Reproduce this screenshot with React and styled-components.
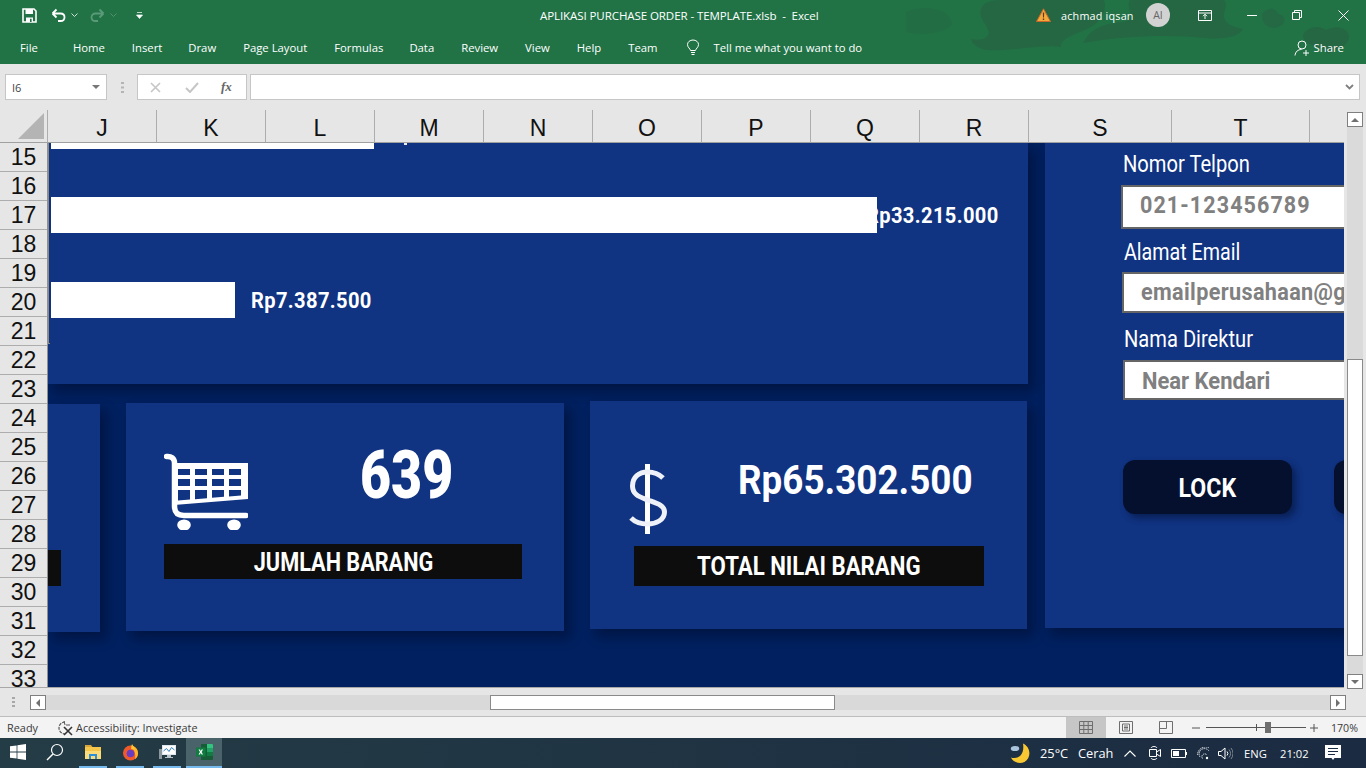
import React from 'react';
import styled, { createGlobalStyle } from 'styled-components';

const Global = createGlobalStyle`
    html, body { margin: 0; padding: 0; background: #e6e6e6; overflow: hidden; }
    * { box-sizing: border-box; }
`;

const UI_FONT = `'Open Sans', 'Noto Sans', sans-serif`;
const SHAPE_FONT = `'Roboto', 'Liberation Sans', sans-serif`;
const PANEL = '#103382';
const SHADOW = '6px 7px 11px rgba(0, 8, 30, 0.42)';

const Page = styled.div`
    width: 1366px;
    height: 768px;
    display: flex;
    flex-direction: column;
    overflow: hidden;
    font-family: ${UI_FONT};
`;

const Drawing = styled.svg`
    display: block;
    flex: none;
`;

/* ribbon */
const Ribbon = styled.header`
    position: relative;
    height: 64px;
    flex: none;
    background: #217346;
    color: #fff;
`;
const RibbonArt = styled.svg`
    position: absolute;
    inset: 0;
`;
const TitleRow = styled.div`
    position: relative;
    height: 30px;
    display: flex;
    align-items: center;
`;
const QuickTools = styled.div`
    display: flex;
    align-items: center;
    padding-left: 22px;
    width: 540px;
`;
const QuickIcon = styled.svg`
    display: block;
    flex: none;
    margin-left: ${p => p.$ml || 0}px;
`;
const DocTitle = styled.div`
    font-size: 11.55px;
    white-space: pre;
    width: 496px;
    letter-spacing: -0.1px;
`;
const UserName = styled.span`
    font-size: 10.8px;
    letter-spacing: 0.2px;
    width: 85px;
    margin-left: 10px;
`;
const Avatar = styled.div`
    width: 24px;
    height: 24px;
    border-radius: 50%;
    background: #d2d2d2;
    color: #666;
    font-size: 10.5px;
    display: flex;
    align-items: center;
    justify-content: center;
`;
const TabRow = styled.nav`
    position: relative;
    height: 34px;
    display: flex;
    align-items: center;
    padding-top: 1px;
    font-size: 11.3px;
`;
const TabList = styled.div`
    display: flex;
    align-items: center;
    padding-left: 20px;
`;
const TabItem = styled.span`
    margin-right: ${p => p.$mr}px;
    white-space: nowrap;
`;
const TellMe = styled.span`
    margin-left: 14px;
    white-space: nowrap;
    width: 580px;
`;
const ShareText = styled.span`
    margin-left: 4px;
`;

/* formula bar */
const FormulaRow = styled.div`
    height: 46px;
    flex: none;
    background: #e6e6e6;
    display: flex;
    padding: 10px 6px 10px 5px;
`;
const NameBox = styled.div`
    width: 102px;
    height: 26px;
    background: #fff;
    border: 1px solid #c6c6c6;
    display: flex;
    align-items: center;
    justify-content: space-between;
    padding: 0 6px 0 6px;
    font-size: 11px;
    color: #444;
`;
const Caret = styled.i`
    width: 0;
    height: 0;
    display: block;
    border-left: 4px solid transparent;
    border-right: 4px solid transparent;
    border-top: 4px solid ${p => p.$color || '#777'};
`;
const GripDots = styled.div`
    width: 30px;
    display: flex;
    align-items: center;
    justify-content: center;
`;
const FxBox = styled.div`
    width: 110px;
    height: 26px;
    background: #fff;
    border: 1px solid #c6c6c6;
    display: flex;
    align-items: center;
    padding-left: 12px;
    gap: 24px;
`;
const FxGlyph = styled.span`
    font-family: 'Liberation Serif', serif;
    font-style: italic;
    font-weight: 700;
    font-size: 13px;
    color: #666;
    margin-left: -2px;
`;
const FormulaInput = styled.div`
    flex: 1;
    height: 26px;
    margin-left: 3px;
    background: #fff;
    border: 1px solid #c6c6c6;
    display: flex;
    align-items: center;
    justify-content: flex-end;
    padding-right: 5px;
`;

/* sheet */
const SheetArea = styled.div`
    height: 578px;
    flex: none;
    display: flex;
    background: #e6e6e6;
`;
const SheetMain = styled.div`
    width: 1344px;
    display: flex;
    flex-direction: column;
    border-bottom: 1px solid #a8a8a8;
`;
const HeaderRow = styled.div`
    height: 33px;
    flex: none;
    display: flex;
    border-bottom: 1px solid #a0a0a0;
`;
const Corner = styled.div`
    width: 48px;
    display: flex;
    align-items: flex-end;
    justify-content: flex-end;
    padding: 0 3px 3px 0;
`;
const ColHead = styled.div`
    width: ${p => p.$w}px;
    flex: none;
    border-left: 1px solid #adadad;
    text-align: center;
    font: 23px/36px 'Liberation Sans', sans-serif;
    color: #111;
`;
const SheetBody = styled.div`
    flex: 1;
    display: flex;
    min-height: 0;
`;
const RowHeads = styled.div`
    width: 48px;
    flex: none;
    overflow: hidden;
    border-right: 1px solid #909090;
`;
const RowHead = styled.div`
    height: 29px;
    border-bottom: 1px solid #adadad;
    text-align: center;
    font: 23px/28px 'Liberation Sans', sans-serif;
    color: #111;
`;
const Canvas = styled.main`
    position: relative;
    width: 1296px;
    overflow: hidden;
    display: flex;
    align-items: flex-start;
    background: #00205f;
`;
const SelectionEdge = styled.div`
    position: absolute;
    z-index: 3;
    left: 0;
    top: 0;
    width: 2px;
    height: 201px;
    border-left: 1px solid #8a8a8a;
    border-bottom: 1px solid #8a8a8a;
`;
const LeftColumn = styled.div`
    width: 980px;
    flex: none;
`;
const ChartPanel = styled.section`
    height: 241px;
    padding-left: 3px;
    background: ${PANEL};
    box-shadow: ${SHADOW};
    display: flex;
    flex-direction: column;
`;
const BarRow = styled.div`
    display: flex;
    align-items: center;
    height: ${p => p.$h}px;
    margin-top: ${p => p.$top}px;
`;
const Bar = styled.div`
    position: relative;
    z-index: 1;
    height: 100%;
    width: ${p => p.$w}px;
    background: #fff;
`;
const BarSpeck = styled.i`
    display: block;
    align-self: flex-start;
    width: 3px;
    height: 2px;
    margin-left: 30px;
    background: #e8ecf5;
`;
const Squeezed = styled.span`
    display: inline-block;
    white-space: nowrap;
    font-family: ${SHAPE_FONT};
    font-weight: ${p => p.$weight || 700};
    font-size: ${p => p.$size}px;
    line-height: 1;
    letter-spacing: ${p => p.$track || 0}px;
    color: ${p => p.$color || '#fff'};
    transform: scaleX(${p => p.$squeeze || 1});
    transform-origin: ${p => p.$origin || 'left'} center;
`;
const BarLabel = styled(Squeezed)`
    margin-left: ${p => p.$ml}px;
    margin-top: 2px;
`;
const CardRow = styled.div`
    display: flex;
    align-items: flex-start;
`;
const Card = styled.section`
    width: ${p => p.$w}px;
    height: 228px;
    flex: none;
    margin-top: ${p => p.$top}px;
    margin-left: ${p => p.$ml || 0}px;
    padding: ${p => p.$pad || '0'};
    background: ${PANEL};
    box-shadow: ${SHADOW};
`;
const CardTop = styled.div`
    display: flex;
    align-items: flex-start;
`;
const CardValue = styled(Squeezed)`
    margin-left: ${p => p.$ml}px;
    margin-top: ${p => p.$mt}px;
`;
const CaptionBar = styled.div`
    width: ${p => p.$w}px;
    height: ${p => p.$h}px;
    margin-top: ${p => p.$top}px;
    margin-left: ${p => p.$ml || 0}px;
    padding-top: ${p => p.$nudge || 0}px;
    background: #0d0d0d;
    display: flex;
    align-items: center;
    justify-content: center;
`;
const SidePanel = styled.aside`
    width: 299px;
    height: 485px;
    flex: none;
    margin-left: 17px;
    padding: 8px 0 0 76px;
    background: ${PANEL};
    box-shadow: ${SHADOW};
    overflow: hidden;
`;
const FieldLabel = styled.div`
    height: 26px;
    margin-top: ${p => p.$top || 0}px;
    padding-left: ${p => p.$indent + 2}px;
    color: #fff;
    font: 400 23px/28px ${SHAPE_FONT};
    white-space: nowrap;
`;
const FieldLabelText = styled.span`
    display: inline-block;
    transform: scaleX(${p => p.$squeeze});
    transform-origin: left center;
`;
const FieldBox = styled.div`
    width: 240px;
    height: ${p => p.$h}px;
    margin-top: ${p => p.$top}px;
    margin-left: ${p => p.$indent}px;
    padding: 0 0 0 17px;
    background: #fff;
    border: 2px solid #666;
    display: flex;
    align-items: center;
    overflow: hidden;
`;
const FieldValue = styled(Squeezed)`
    color: #808080;
    margin-top: ${p => p.$mt}px;
`;
const ButtonRow = styled.div`
    display: flex;
    gap: 42px;
    margin-top: 60px;
    margin-left: 2px;
`;
const LockButton = styled.div`
    width: 169px;
    height: 54px;
    flex: none;
    padding-top: 2px;
    border-radius: 12px;
    background: #050f2e;
    box-shadow: 4px 4px 7px rgba(0, 8, 30, 0.45);
    display: flex;
    align-items: center;
    justify-content: center;
`;
const VScroll = styled.div`
    width: 22px;
    flex: none;
    display: flex;
    flex-direction: column;
    align-items: center;
    padding: 2px 0 1px 0;
    height: 580px;
    position: relative;
`;
const VTrack = styled.div`
    flex: 1;
    width: 16px;
    background: #dadada;
    display: flex;
    flex-direction: column;
`;
const VThumb = styled.div`
    width: 16px;
    height: 297px;
    margin-top: 232px;
    background: #fff;
    border: 1px solid #8a8a8a;
`;
const ScrollBtn = styled.div`
    width: 16px;
    height: 15px;
    flex: none;
    background: #fff;
    border: 1px solid #7f7f7f;
    display: flex;
    align-items: center;
    justify-content: center;
`;
const Arrow = styled.i`
    display: block;
    width: 0;
    height: 0;
    ${p => p.$dir === 'up' && 'border-left: 4px solid transparent; border-right: 4px solid transparent; border-bottom: 4px solid #707070;'}
    ${p => p.$dir === 'down' && 'border-left: 4px solid transparent; border-right: 4px solid transparent; border-top: 4px solid #707070;'}
    ${p => p.$dir === 'left' && 'border-top: 4px solid transparent; border-bottom: 4px solid transparent; border-right: 4px solid #707070;'}
    ${p => p.$dir === 'right' && 'border-top: 4px solid transparent; border-bottom: 4px solid transparent; border-left: 4px solid #707070;'}
`;

/* horizontal scroll */
const HScrollRow = styled.div`
    height: 28px;
    flex: none;
    background: #e6e6e6;
    display: flex;
    align-items: flex-start;
    padding: 7px 0 0 12px;
`;
const HDots = styled.div`
    width: 18px;
    height: 15px;
    display: flex;
    flex-direction: column;
    gap: 2px;
    padding-top: 2px;
`;
const Dot = styled.i`
    display: block;
    width: 3px;
    height: 2px;
    background: #a8a8a8;
`;
const HTrack = styled.div`
    width: 1284px;
    height: 15px;
    background: #d9d9d9;
    padding-left: 444px;
`;
const HThumb = styled.div`
    width: 345px;
    height: 15px;
    background: #fff;
    border: 1px solid #8a8a8a;
`;

/* status bar */
const StatusBar = styled.footer`
    height: 22px;
    flex: none;
    background: #f3f3f3;
    border-top: 1px solid #bdbdbd;
    display: flex;
    align-items: center;
    padding-left: 7px;
    font-size: 10.9px;
    color: #3a3a3a;
`;
const ReadyText = styled.span`
    width: 50px;
`;
const AccessText = styled.span`
    margin-left: 2px;
    width: 990px;
    white-space: nowrap;
`;
const ViewBtn = styled.div`
    width: 40px;
    height: 21px;
    background: ${p => (p.$active ? '#c6c6c6' : 'transparent')};
    display: flex;
    align-items: center;
    justify-content: center;
`;
const ZoomBox = styled.div`
    display: flex;
    align-items: center;
    margin-left: 6px;
`;
const ZoomTrack = styled.div`
    position: relative;
    width: 100px;
    height: 1px;
    margin: 0 4px 0 6px;
    background: #555;
`;
const ZoomTick = styled.i`
    position: absolute;
    left: ${p => p.$x}px;
    top: ${p => p.$top}px;
    width: ${p => p.$w}px;
    height: ${p => p.$h}px;
    background: ${p => p.$color};
`;
const ZoomPct = styled.span`
    margin-left: 13px;
    font-size: 10.6px;
`;

/* taskbar */
const Taskbar = styled.div`
    height: 30px;
    flex: none;
    background: linear-gradient(90deg, #243c45, #1b2b42);
    display: flex;
    align-items: stretch;
    color: #fff;
`;
const TaskSlot = styled.div`
    width: ${p => p.$w}px;
    margin-left: ${p => p.$ml || 0}px;
    flex: none;
    display: flex;
    align-items: center;
    justify-content: center;
    background: ${p => (p.$active ? '#4a636b' : 'transparent')};
    border-bottom: 2px solid ${p => (p.$mark ? '#76b9ed' : 'transparent')};
`;
const Tray = styled.div`
    margin-left: 788px;
    display: flex;
    align-items: center;
    font-size: 12.8px;
`;
const TrayText = styled.span`
    margin-left: ${p => p.$ml}px;
    width: ${p => p.$w}px;
    font-size: ${p => p.$size || 12.8}px;
    white-space: nowrap;
`;
const TrayIcon = styled.svg`
    display: block;
    flex: none;
    margin-left: ${p => p.$ml}px;
`;

const Cart = () => (
    <Drawing width="84" height="77" viewBox="0 0 84 77">
        <path d="M10 10H84V46L10 52Z" fill="#fff" />
        <path d="M2.5 3.5C7 3 10.5 5 10.5 10V53C10.5 60 14 62.5 20 62.5H82" fill="none" stroke="#fff" strokeWidth="5.5" strokeLinecap="round" />
        {[14, 31, 48, 65].map(x => [16, 26].map(y => <rect key={`${x}-${y}`} x={x} y={y} width="12" height={y === 16 ? 6 : 7} fill={PANEL} />))}
        <path d="M14 37H26V46.6L14 47.6ZM31 37H43V45.2L31 46.2ZM48 37H60V43.8L48 44.8ZM65 37H77V42.4L65 43.4Z" fill={PANEL} />
        <ellipse cx="20" cy="72" rx="6.8" ry="5.5" fill="#fff" />
        <ellipse cx="70" cy="72" rx="6.8" ry="5.5" fill="#fff" />
    </Drawing>
);

const Dollar = () => (
    <Drawing width="38" height="70" viewBox="0 0 38 70">
        <path d="M18.5 0V70" stroke="#fff" strokeWidth="5" fill="none" />
        <path d="M34 14C30 10 24 8 18.5 8C10 8 3.5 13 3.5 22C3.5 31 11 33 18.5 36C27 39 35.5 41 35.5 48C35.5 56 27 60 18.5 60C12 60 6 58 2 54" stroke="#eef1f8" strokeWidth="5" fill="none" />
    </Drawing>
);

const columns = [
    ['J', 109], ['K', 109], ['L', 109], ['M', 109], ['N', 109], ['O', 109],
    ['P', 109], ['Q', 109], ['R', 109], ['S', 143], ['T', 138], ['', 35],
];
const rows = Array.from({ length: 19 }, (_, i) => i + 15);
const tabs = [
    ['File', 35], ['Home', 27], ['Insert', 26], ['Draw', 27], ['Page Layout', 27], ['Formulas', 26],
    ['Data', 27], ['Review', 27], ['View', 27], ['Help', 27], ['Team', 28],
];

const App = () => (
    <Page>
        <Global />
        <Ribbon>
            <RibbonArt width="1366" height="64" viewBox="0 0 1366 64">
                <g fill="#256743">
                    <path d="M906 12C925 4 950 8 952 24C945 34 920 36 906 32Z" opacity="0.45" />
                    <path d="M971 39C985 42 994 36 985 24C976 12 980 0 1000 0H1104C1108 14 1098 26 1080 32C1070 36 1060 40 1061 47C1040 44 1010 52 986 50C978 48 972 44 971 39Z" />
                    <path d="M1083 43C1090 30 1100 24 1122 22C1140 20 1124 8 1130 0H1224C1232 8 1210 22 1243 29C1240 36 1225 40 1205 38C1170 34 1120 36 1083 43Z" />
                    <path d="M1262 14C1268 6 1276 8 1278 14C1284 14 1288 22 1280 26C1274 30 1262 28 1262 14Z" opacity="0.8" />
                    <path d="M1303 36C1305 28 1318 24 1326 30C1336 24 1350 28 1349 38C1346 48 1336 50 1328 54C1322 46 1304 46 1303 36Z" />
                </g>
            </RibbonArt>
            <TitleRow>
                <QuickTools>
                    <QuickIcon width="15" height="15" viewBox="0 0 15 15">
                        <path d="M1 1H12L14 3V14H1Z" fill="none" stroke="#fff" strokeWidth="1.6" />
                        <path d="M3.5 1H11V6H3.5ZM4 9.5H11V14H4Z" fill="#fff" />
                        <path d="M8 10.8H9.6V14H8Z" fill="#217346" />
                    </QuickIcon>
                    <QuickIcon $ml={14} width="15" height="14" viewBox="0 0 15 14">
                        <path d="M1.5 5.5H9.5C12 5.5 13.5 7.2 13.5 9.2C13.5 11.4 12 13 9.5 13H7M1.5 5.5L5.5 1.5M1.5 5.5L5.5 9.5" fill="none" stroke="#fff" strokeWidth="1.8" />
                    </QuickIcon>
                    <QuickIcon $ml={5} width="7" height="4" viewBox="0 0 7 4"><path d="M.5.5L3.5 3.5L6.5.5" fill="none" stroke="#cfe0d6" /></QuickIcon>
                    <QuickIcon $ml={12} width="15" height="14" viewBox="0 0 15 14">
                        <path d="M13.5 5.5H5.5C3 5.5 1.5 7.2 1.5 9.2C1.5 11.4 3 13 5.5 13H8M13.5 5.5L9.5 1.5M13.5 5.5L9.5 9.5" fill="none" stroke="#5b9a78" strokeWidth="1.8" />
                    </QuickIcon>
                    <QuickIcon $ml={5} width="7" height="4" viewBox="0 0 7 4"><path d="M.5.5L3.5 3.5L6.5.5" fill="none" stroke="#4f9270" /></QuickIcon>
                    <QuickIcon $ml={19} width="7" height="7" viewBox="0 0 7 7"><path d="M1 .5H6M.5 3H6.5L3.5 6.5Z" fill="#fff" stroke="#fff" strokeWidth=".7" /></QuickIcon>
                </QuickTools>
                <DocTitle>APLIKASI PURCHASE ORDER - TEMPLATE.xlsb  -  Excel</DocTitle>
                <QuickIcon width="15" height="14" viewBox="0 0 15 14">
                    <path d="M7.5.8L14.5 13.5H.5Z" fill="#f4a93c" stroke="#c9662a" strokeWidth="1" />
                    <path d="M6.8 4.5H8.2L8 9.5H7ZM6.8 10.5H8.2V12H6.8Z" fill="#5a3a1a" />
                </QuickIcon>
                <UserName>achmad iqsan</UserName>
                <Avatar>AI</Avatar>
                <QuickIcon $ml={28} width="14" height="11" viewBox="0 0 14 11">
                    <path d="M.5.5H13.5V10.5H.5ZM.5 3H13.5M7 9V4.5M5 6.2L7 4.2L9 6.2" fill="none" stroke="#fff" />
                </QuickIcon>
                <QuickIcon $ml={35} width="10" height="1" viewBox="0 0 10 1"><path d="M0 .5H10" stroke="#fff" /></QuickIcon>
                <QuickIcon $ml={35} width="10" height="10" viewBox="0 0 10 10">
                    <path d="M.5 2.5H7.5V9.5H.5ZM2.5 2.5V.5H9.5V7.5H7.5" fill="none" stroke="#fff" />
                </QuickIcon>
                <QuickIcon $ml={36} width="11" height="11" viewBox="0 0 11 11"><path d="M.5.5L10.5 10.5M10.5.5L.5 10.5" stroke="#fff" /></QuickIcon>
            </TitleRow>
            <TabRow>
                <TabList>
                    {tabs.map(([name, gap]) => <TabItem key={name} $mr={gap}>{name}</TabItem>)}
                </TabList>
                <Drawing width="14" height="17" viewBox="0 0 14 17">
                    <path d="M4.5 11.5C4.2 9.5 1.5 8.5 1.5 5.5C1.5 3 4 1 7 1C10 1 12.5 3 12.5 5.5C12.5 8.5 9.8 9.5 9.5 11.5ZM5 13.5H9M5.5 15.5H8.5" fill="none" stroke="#fff" />
                </Drawing>
                <TellMe>Tell me what you want to do</TellMe>
                <Drawing width="16" height="16" viewBox="0 0 16 16">
                    <circle cx="8" cy="5" r="4" fill="none" stroke="#fff" />
                    <path d="M1 15.5C1.5 11.5 4 9.5 7.5 9.5M9 13H15M12 10V16" fill="none" stroke="#fff" />
                </Drawing>
                <ShareText>Share</ShareText>
            </TabRow>
        </Ribbon>

        <FormulaRow>
            <NameBox>I6<Caret /></NameBox>
            <GripDots>
                <svg width="3" height="11" viewBox="0 0 3 11"><path d="M0 0H3V2H0ZM0 4.5H3V6.5H0ZM0 9H3V11H0Z" fill="#b4b4b4" /></svg>
            </GripDots>
            <FxBox>
                <svg width="11" height="11" viewBox="0 0 11 11"><path d="M1 1L10 10M10 1L1 10" stroke="#c6c6c6" strokeWidth="1.6" /></svg>
                <svg width="14" height="11" viewBox="0 0 14 11"><path d="M1 6L5 10L13 1" fill="none" stroke="#c6c6c6" strokeWidth="2" /></svg>
                <FxGlyph>fx</FxGlyph>
            </FxBox>
            <FormulaInput>
                <svg width="9" height="6" viewBox="0 0 9 6"><path d="M1 1L4.5 4.5L8 1" fill="none" stroke="#808080" strokeWidth="1.8" /></svg>
            </FormulaInput>
        </FormulaRow>

        <SheetArea>
            <SheetMain>
                <HeaderRow>
                    <Corner>
                        <svg width="26" height="26" viewBox="0 0 26 26"><path d="M26 0V26H0Z" fill="#b4b4b4" /></svg>
                    </Corner>
                    {columns.map(([name, w]) => <ColHead key={name || 'end'} $w={w}>{name}</ColHead>)}
                </HeaderRow>
                <SheetBody>
                    <RowHeads>
                        {rows.map(n => <RowHead key={n}>{n}</RowHead>)}
                    </RowHeads>
                    <Canvas>
                        <SelectionEdge />
                        <LeftColumn>
                            <ChartPanel>
                                <BarRow $h={6} $top={0}>
                                    <Bar $w={323} />
                                    <BarSpeck />
                                </BarRow>
                                <BarRow $h={36} $top={48}>
                                    <Bar $w={826} />
                                    <BarLabel $size={22} $squeeze={0.915} $track={0.4} $ml={-11}>Rp33.215.000</BarLabel>
                                </BarRow>
                                <BarRow $h={36} $top={49}>
                                    <Bar $w={184} />
                                    <BarLabel $size={22} $squeeze={0.915} $track={0.4} $ml={16}>Rp7.387.500</BarLabel>
                                </BarRow>
                            </ChartPanel>
                            <CardRow>
                                <Card $w={52} $top={20} $pad="146px 0 0 0">
                                    <CaptionBar $w={13} $h={36} $top={0} />
                                </Card>
                                <Card $w={438} $top={19} $ml={26} $pad="50px 0 0 38px">
                                    <CardTop>
                                        <Cart />
                                        <CardValue $ml={112} $mt={-11} $size={67} $weight={900} $squeeze={0.8}>639</CardValue>
                                    </CardTop>
                                    <CaptionBar $w={358} $h={35} $top={14} $nudge={2}>
                                        <Squeezed $size={25} $squeeze={0.867} $origin="center">JUMLAH BARANG</Squeezed>
                                    </CaptionBar>
                                </Card>
                                <Card $w={437} $top={17} $ml={26} $pad="63px 0 0 39px">
                                    <CardTop>
                                        <Dollar />
                                        <CardValue $ml={71} $mt={-3} $size={40} $squeeze={0.92}>Rp65.302.500</CardValue>
                                    </CardTop>
                                    <CaptionBar $w={350} $h={40} $top={12} $ml={5}>
                                        <Squeezed $size={26} $squeeze={0.854} $origin="center">TOTAL NILAI BARANG</Squeezed>
                                    </CaptionBar>
                                </Card>
                            </CardRow>
                        </LeftColumn>
                        <SidePanel>
                            <FieldLabel $indent={0}><FieldLabelText $squeeze={0.875}>Nomor Telpon</FieldLabelText></FieldLabel>
                            <FieldBox $h={44} $top={8} $indent={0}>
                                <FieldValue $size={24} $track={1.2} $squeeze={0.897} $mt={-4}>021-123456789</FieldValue>
                            </FieldBox>
                            <FieldLabel $indent={1} $top={10}><FieldLabelText $squeeze={0.855}>Alamat Email</FieldLabelText></FieldLabel>
                            <FieldBox $h={41} $top={7} $indent={1}>
                                <FieldValue $size={24} $squeeze={0.9} $track={0.4} $mt={-2}>emailperusahaan@gmail.com</FieldValue>
                            </FieldBox>
                            <FieldLabel $indent={1} $top={13}><FieldLabelText $squeeze={0.875}>Nama Direktur</FieldLabelText></FieldLabel>
                            <FieldBox $h={40} $top={8} $indent={2}>
                                <FieldValue $size={24} $squeeze={0.915} $mt={2}>Near Kendari</FieldValue>
                            </FieldBox>
                            <ButtonRow>
                                <LockButton><Squeezed $size={26} $squeeze={0.89} $origin="center">LOCK</Squeezed></LockButton>
                                <LockButton />
                            </ButtonRow>
                        </SidePanel>
                    </Canvas>
                </SheetBody>
            </SheetMain>
            <VScroll>
                <ScrollBtn><Arrow $dir="up" /></ScrollBtn>
                <VTrack><VThumb /></VTrack>
                <ScrollBtn><Arrow $dir="down" /></ScrollBtn>
            </VScroll>
        </SheetArea>

        <HScrollRow>
            <HDots><Dot /><Dot /><Dot /></HDots>
            <ScrollBtn><Arrow $dir="left" /></ScrollBtn>
            <HTrack><HThumb /></HTrack>
            <ScrollBtn><Arrow $dir="right" /></ScrollBtn>
        </HScrollRow>

        <StatusBar>
            <ReadyText>Ready</ReadyText>
            <Drawing width="17" height="16" viewBox="0 0 17 16">
                <path d="M8 2A6 6 0 1 0 8 14" fill="none" stroke="#555" strokeWidth="1.2" strokeDasharray="3 1" />
                <path d="M7 1L8 5M9 5H13" stroke="#555" />
                <path d="M7 7L15 15M15 7L7 15" stroke="#333" strokeWidth="1.6" />
            </Drawing>
            <AccessText>Accessibility: Investigate</AccessText>
            <ViewBtn $active>
                <svg width="14" height="13" viewBox="0 0 14 13"><path d="M.5.5H13.5V12.5H.5ZM.5 4.5H13.5M.5 8.5H13.5M4.8.5V12.5M9.2.5V12.5" fill="none" stroke="#6e6e6e" /></svg>
            </ViewBtn>
            <ViewBtn>
                <svg width="14" height="13" viewBox="0 0 14 13"><path d="M.5.5H13.5V12.5H.5ZM3.5 3H10.5V10H3.5ZM5 5H9M5 6.5H9M5 8H9" fill="none" stroke="#6e6e6e" /></svg>
            </ViewBtn>
            <ViewBtn>
                <svg width="14" height="13" viewBox="0 0 14 13"><path d="M.5.5H13.5V12.5H.5ZM.5 7.5H7.5V.5" fill="none" stroke="#6e6e6e" /></svg>
            </ViewBtn>
            <ZoomBox>
                <svg width="8" height="2" viewBox="0 0 8 2"><path d="M0 1H8" stroke="#555" /></svg>
                <ZoomTrack>
                    <ZoomTick $x={50} $top={-3} $w={1} $h={7} $color="#555" />
                    <ZoomTick $x={59} $top={-5} $w={6} $h={11} $color="#6e6e6e" />
                </ZoomTrack>
                <svg width="8" height="8" viewBox="0 0 8 8"><path d="M0 4H8M4 0V8" stroke="#555" /></svg>
                <ZoomPct>170%</ZoomPct>
            </ZoomBox>
        </StatusBar>

        <Taskbar>
            <TaskSlot $w={36}>
                <svg width="16" height="16" viewBox="0 0 16 16"><path d="M0 2.3L6.6 1.4V7.6H0ZM7.4 1.3L16 0V7.6H7.4ZM0 8.4H6.6V14.6L0 13.7ZM7.4 8.4H16V16L7.4 14.7Z" fill="#fff" /></svg>
            </TaskSlot>
            <TaskSlot $w={37}>
                <svg width="18" height="18" viewBox="0 0 18 18"><circle cx="11" cy="7" r="5.5" fill="none" stroke="#fff" strokeWidth="1.2" /><path d="M7 11L1 17" stroke="#fff" strokeWidth="1.4" /></svg>
            </TaskSlot>
            <TaskSlot $w={28} $ml={6} $mark>
                <svg width="16" height="15" viewBox="0 0 16 15"><path d="M0 0H6L7.5 2H0Z" fill="#d9a63c" /><path d="M0 2H16V14H0Z" fill="#f5c84c" /><path d="M0 6H16V14H0Z" fill="#fbdc78" /><path d="M4 14V9H12V14H10V11H6V14Z" fill="#2f8fd8" /></svg>
            </TaskSlot>
            <TaskSlot $w={28} $ml={9} $mark>
                <svg width="17" height="17" viewBox="0 0 17 17">
                    <circle cx="8.5" cy="9" r="7.5" fill="#f0592b" />
                    <path d="M8.5 1.5C13 2 16 5 16 9C16 12 15 14 13 15C14 11 13 6 8.5 1.5Z" fill="#fdb42b" />
                    <circle cx="8.5" cy="9.5" r="3.8" fill="#6a3cc0" />
                    <path d="M10 0C11 2 12.5 3 13 6L9 5Z" fill="#fcc92e" />
                </svg>
            </TaskSlot>
            <TaskSlot $w={28} $ml={9} $mark>
                <svg width="17" height="16" viewBox="0 0 17 16"><path d="M3 1H17V11H3Z" fill="#dfe8ee" /><path d="M4 2H16V10H4Z" fill="#fff" /><path d="M4.5 7L7.5 4.5L10 7.5L12.5 3.5L15.5 6" fill="none" stroke="#2f7fc0" /><path d="M8 11H12V13H14V14H6V13H8Z" fill="#b8c2c8" /><path d="M0 5H3V15H0Z" fill="#8b979d" /></svg>
            </TaskSlot>
            <TaskSlot $w={36} $ml={5} $active $mark>
                <svg width="17" height="16" viewBox="0 0 17 16">
                    <path d="M5 0H16A1 1 0 0 1 17 1V15A1 1 0 0 1 16 16H5Z" fill="#185c37" />
                    <path d="M11 0H16A1 1 0 0 1 17 1V4H11Z" fill="#33c481" />
                    <path d="M11 4H17V8H11Z" fill="#21a366" />
                    <path d="M11 8H17V12H11Z" fill="#107c41" />
                    <path d="M0 3.5H9.5V12.5H0Z" fill="#107c41" />
                    <path d="M2.5 5.5H4L4.8 7.2L5.6 5.5H7L5.6 8L7 10.5H5.6L4.8 8.8L4 10.5H2.5L4 8Z" fill="#fff" />
                </svg>
            </TaskSlot>
            <Tray>
                <TrayIcon $ml={0} width="20" height="21" viewBox="0 0 20 21">
                    <path d="M13 0.5C21 4 21.5 15 14.5 19C9 21.5 3 19 1 14.5C7 16.5 15 13 13 0.5Z" fill="#f8c832" />
                    <ellipse cx="5" cy="5.5" rx="4.2" ry="2.6" fill="#a9c4dd" />
                </TrayIcon>
                <TrayText $ml={10} $w={29}>25°C</TrayText>
                <TrayText $ml={9} $w={36}>Cerah</TrayText>
                <TrayIcon $ml={10} width="12" height="7" viewBox="0 0 12 7"><path d="M.5 6.5L6 1L11.5 6.5" fill="none" stroke="#fff" strokeWidth="1.1" /></TrayIcon>
                <TrayIcon $ml={13} width="12" height="16" viewBox="0 0 12 16">
                    <path d="M2 3C3 1 7 1 8 3M2 13C3 15 7 15 8 13" fill="none" stroke="#fff" />
                    <path d="M.5 4.5H7.5V11.5H.5ZM7.5 7L11.5 4.5V11.5L7.5 9" fill="none" stroke="#fff" />
                </TrayIcon>
                <TrayIcon $ml={10} width="16" height="9" viewBox="0 0 16 9">
                    <path d="M.5.5H14.5V8.5H.5Z" fill="none" stroke="#fff" /><path d="M2 2H8V7H2Z" fill="#fff" /><path d="M15 3H16V6H15Z" fill="#fff" />
                </TrayIcon>
                <TrayIcon $ml={10} width="13" height="13" viewBox="0 0 13 13">
                    <path d="M.5 8A8 8 0 0 1 12 .8M3 10A5 5 0 0 1 12 4M5.5 11.5A2.5 2.5 0 0 1 10 8" fill="none" stroke="#d8dde2" strokeDasharray="1.5 .6" />
                    <circle cx="10" cy="11" r="1.2" fill="#fff" />
                </TrayIcon>
                <TrayIcon $ml={8} width="15" height="13" viewBox="0 0 15 13">
                    <path d="M.5 4.5H3L7 1V12L3 8.5H.5Z" fill="none" stroke="#fff" />
                    <path d="M9 4.5A3 3 0 0 1 9 8.5" fill="none" stroke="#fff" />
                    <path d="M11 2.5A6 6 0 0 1 11 10.5M13 1A8.5 8.5 0 0 1 13 12" fill="none" stroke="#7f8a93" />
                </TrayIcon>
                <TrayText $ml={11} $w={23} $size={11.2}>ENG</TrayText>
                <TrayText $ml={13} $w={27} $size={11.2}>21:02</TrayText>
                <TrayIcon $ml={18} width="16" height="17" viewBox="0 0 16 17">
                    <path d="M0 0H16V13H9.5L8 15L6.5 13H0Z" fill="#fff" /><path d="M3 3.5H13M3 6.5H13M3 9.5H10" stroke="#1b2b42" />
                </TrayIcon>
            </Tray>
        </Taskbar>
    </Page>
);

export default App;
